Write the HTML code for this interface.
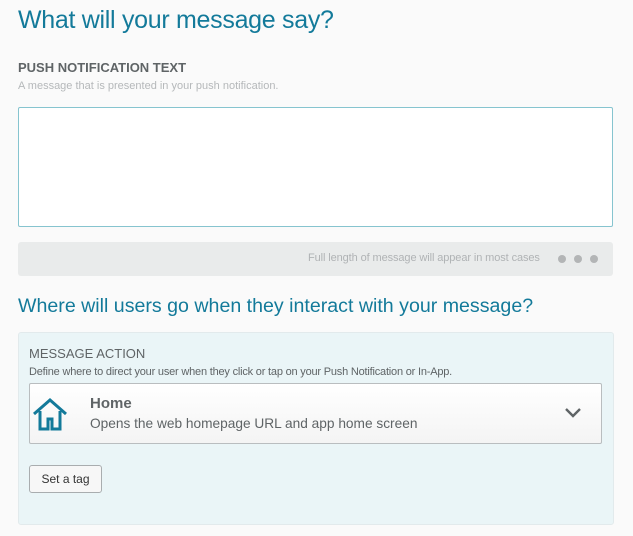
<!DOCTYPE html>
<html><head><style>
body{margin:0;background:#fafafa;width:633px;height:536px;overflow:hidden;font-family:"Liberation Sans",sans-serif;position:relative}
.a{position:absolute;white-space:nowrap}
</style></head><body>
<div class="a" style="left:18px;top:6px;font-size:25px;color:#137a9a;letter-spacing:-0.3px">What will your message say?</div>
<div class="a" style="left:18px;top:60px;font-size:13px;font-weight:bold;color:#5f6466">PUSH NOTIFICATION TEXT</div>
<div class="a" style="left:18px;top:80px;font-size:11px;color:#b5b8ba">A message that is presented in your push notification.</div>
<div class="a" style="left:18px;top:107px;width:593px;height:118px;background:#fff;border:1px solid #86c4cf;border-radius:2px"></div>
<div class="a" style="left:18px;top:242px;width:595px;height:34px;background:#e9ebeb;border-radius:3px"></div>
<div class="a" style="left:308px;top:252px;font-size:11px;color:#b0b3b5;letter-spacing:-0.1px">Full length of message will appear in most cases</div>
<div class="a" style="left:558px;top:255px;width:8px;height:8px;border-radius:50%;background:#b3b5b6"></div>
<div class="a" style="left:574px;top:255px;width:8px;height:8px;border-radius:50%;background:#b3b5b6"></div>
<div class="a" style="left:590px;top:255px;width:8px;height:8px;border-radius:50%;background:#b3b5b6"></div>
<div class="a" style="left:18px;top:295px;font-size:19.6px;color:#137a9a">Where will users go when they interact with your message?</div>
<div class="a" style="left:18px;top:332px;width:594px;height:191px;background:#eaf5f7;border:1px solid #e2eaec;border-radius:3px"></div>
<div class="a" style="left:29px;top:346px;font-size:13px;color:#5f6466">MESSAGE ACTION</div>
<div class="a" style="left:29px;top:366px;font-size:11px;color:#5f6466;letter-spacing:-0.2px">Define where to direct your user when they click or tap on your Push Notification or In-App.</div>
<div class="a" style="left:29px;top:383px;width:571px;height:59px;background:linear-gradient(#fff,#f4f4f4);border:1px solid #b9bdbf;border-radius:2px"></div>
<svg class="a" style="left:32px;top:396px" width="36" height="36" viewBox="0 0 36 36"><path d="M2 18 L18 4 L34 18 M8 15 V33 H16 V23 H20 V33 H28 V15" fill="none" stroke="#137a9a" stroke-width="3"/></svg>
<div class="a" style="left:90px;top:395px;font-size:15px;font-weight:bold;color:#5f6466">Home</div>
<div class="a" style="left:90px;top:416px;font-size:13.7px;color:#5f6466">Opens the web homepage URL and app home screen</div>
<svg class="a" style="left:564px;top:407px" width="18" height="12"><path d="M2 2 L9 9 L16 2" fill="none" stroke="#5f6466" stroke-width="2.4"/></svg>
<div class="a" style="left:29px;top:465px;width:71px;height:26px;background:#f7f7f7;border:1px solid #a9adaf;border-radius:3px;font-size:12px;color:#333;text-align:center;line-height:26px">Set a tag</div>
</body></html>
